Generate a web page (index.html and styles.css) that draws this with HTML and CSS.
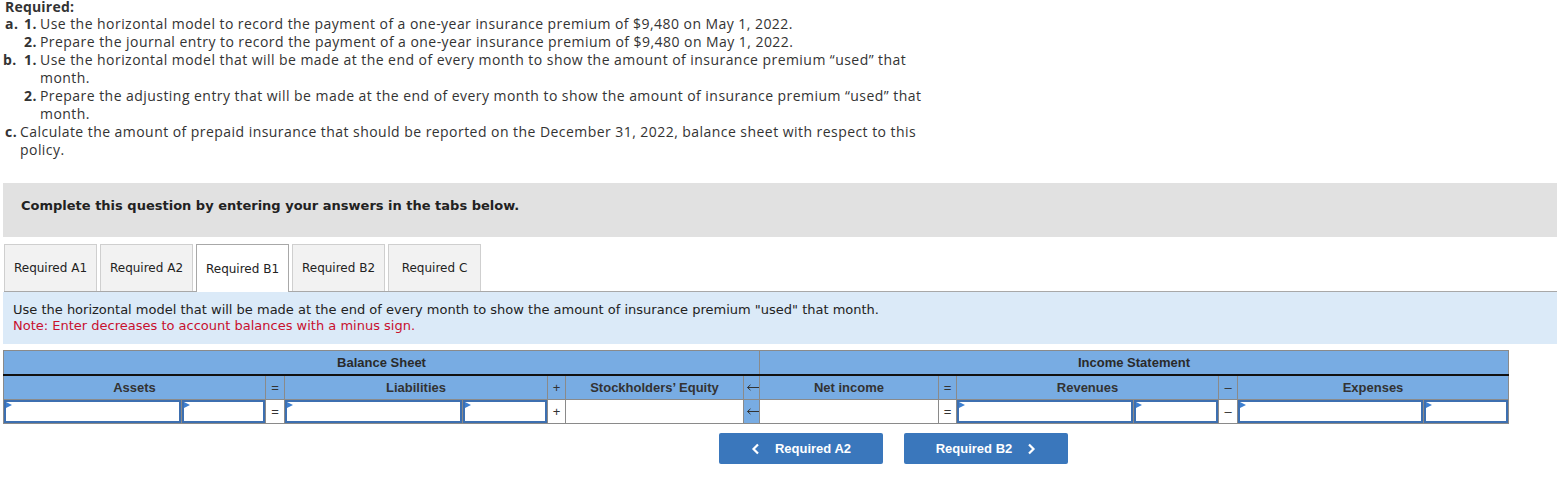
FILE: index.html
```html
<!DOCTYPE html>
<html>
<head>
<meta charset="utf-8">
<link rel="stylesheet" href="styles.css">
</head>
<body>
<div class="req">
  <div class="req-title">Required:</div>
  <div class="item">
    <span class="lbl">a.</span>
    <div class="subs">
      <div class="sub"><span class="num">1.</span><span class="txt">Use the horizontal model to record the payment of a one-year insurance premium of $9,480 on May 1, 2022.</span></div>
      <div class="sub"><span class="num">2.</span><span class="txt">Prepare the journal entry to record the payment of a one-year insurance premium of $9,480 on May 1, 2022.</span></div>
    </div>
  </div>
  <div class="item item-b">
    <span class="lbl">b.</span>
    <div class="subs">
      <div class="sub"><span class="num">1.</span><span class="txt">Use the horizontal model that will be made at the end of every month to show the amount of insurance premium “used” that month.</span></div>
      <div class="sub"><span class="num">2.</span><span class="txt">Prepare the adjusting entry that will be made at the end of every month to show the amount of insurance premium “used” that month.</span></div>
    </div>
  </div>
  <div class="item item-c">
    <span class="lbl">c.</span>
    <span class="txt">Calculate the amount of prepaid insurance that should be reported on the December 31, 2022, balance sheet with respect to this policy.</span>
  </div>
</div>

<div class="banner">Complete this question by entering your answers in the tabs below.</div>

<div class="tabs">
  <div class="tab">Required A1</div>
  <div class="tab">Required A2</div>
  <div class="tab active">Required B1</div>
  <div class="tab">Required B2</div>
  <div class="tab">Required C</div>
</div>

<div class="panel">
  <div>Use the horizontal model that will be made at the end of every month to show the amount of insurance premium "used" that month.</div>
  <div class="note">Note: Enter decreases to account balances with a minus sign.</div>
</div>

<table class="model">
  <colgroup>
    <col style="width:178px"><col style="width:84px"><col style="width:19px">
    <col style="width:178px"><col style="width:85px"><col style="width:18px">
    <col style="width:178px"><col style="width:16px"><col style="width:179px">
    <col style="width:18px"><col style="width:177px"><col style="width:85px">
    <col style="width:19px"><col style="width:186px"><col style="width:85px">
  </colgroup>
  <tr class="r1">
    <th colspan="8">Balance Sheet</th>
    <th colspan="7">Income Statement</th>
  </tr>
  <tr class="r2">
    <th colspan="2" class="h">Assets</th>
    <th class="op">=</th>
    <th colspan="2" class="h">Liabilities</th>
    <th class="op">+</th>
    <th class="h">Stockholders’ Equity</th>
    <th class="op arrow"><svg class="arr" width="13" height="7" viewBox="0 0 13 7"><path d="M1.5 3.5 H13 M4.5 0.8 L1.5 3.5 L4.5 6.2" fill="none" stroke="#333" stroke-width="1"/></svg></th>
    <th class="h">Net income</th>
    <th class="op">=</th>
    <th colspan="2" class="h">Revenues</th>
    <th class="op">–</th>
    <th colspan="2" class="h">Expenses</th>
  </tr>
  <tr class="r3">
    <td class="in"><div class="box"></div></td>
    <td class="in"><div class="box"></div></td>
    <td class="op">=</td>
    <td class="in"><div class="box"></div></td>
    <td class="in"><div class="box"></div></td>
    <td class="op">+</td>
    <td class="plain"></td>
    <td class="op arrow"><svg class="arr" width="13" height="7" viewBox="0 0 13 7"><path d="M1.5 3.5 H13 M4.5 0.8 L1.5 3.5 L4.5 6.2" fill="none" stroke="#333" stroke-width="1"/></svg></td>
    <td class="plain"></td>
    <td class="op">=</td>
    <td class="in"><div class="box"></div></td>
    <td class="in"><div class="box"></div></td>
    <td class="op">–</td>
    <td class="in"><div class="box"></div></td>
    <td class="in"><div class="box"></div></td>
  </tr>
</table>

<div class="nav">
  <button class="btn"><svg width="10" height="12" viewBox="0 0 10 12"><path d="M7 1.5 L2.5 6 L7 10.5" fill="none" stroke="#fff" stroke-width="2.2"/></svg><span>Required A2</span></button>
  <button class="btn"><span>Required B2</span><svg width="10" height="12" viewBox="0 0 10 12"><path d="M3 1.5 L7.5 6 L3 10.5" fill="none" stroke="#fff" stroke-width="2.2"/></svg></button>
</div>
</body>
</html>
```
FILE: styles.css
```css
body {
  margin: 0;
  background: #fff;
  color: #333;
  font-family: "Open Sans", "Liberation Sans", sans-serif;
}

.req {
  margin-top: -2px;
  padding-left: 5px;
  width: 925px;
  font-size: 14px;
  line-height: 18px;
  letter-spacing: 0.45px;
  color: #333;
}
.req-title { font-weight: 700; letter-spacing: 0.2px; line-height: 17px; }
.item { display: flex; }
.lbl { font-weight: 700; width: 19px; flex: none; }
.item-b .lbl { margin-left: -2px; width: 21px; }
.item-c .lbl { width: 15px; }
.subs { flex: 1; }
.sub { display: flex; }
.num { font-weight: 700; width: 16px; flex: none; }
.txt { flex: 1; }

.banner {
  margin: 24px 0 0 3px;
  height: 54px;
  box-sizing: border-box;
  background: #e1e1e1;
  padding: 0 0 10px 18px;
  display: flex;
  align-items: center;
  font-family: "DejaVu Sans", sans-serif;
  font-weight: 700;
  font-size: 13px;
  color: #222;
}

.tabs {
  margin: 7px 0 0 4px;
  display: flex;
  gap: 3px;
  border-bottom: 1px solid #a8a8a8;
  height: 47px;
}
.tab {
  width: 93px;
  height: 47px;
  box-sizing: border-box;
  border: 1px solid #cfcfcf;
  border-bottom: none;
  background: #f2f2f2;
  display: flex;
  align-items: center;
  justify-content: center;
  font-family: "DejaVu Sans", sans-serif;
  font-size: 12px;
  color: #222;
}
.tab.active {
  background: #fff;
  border-color: #a8a8a8;
  height: 48px;
}

.panel {
  margin-left: 3px;
  height: 52px;
  box-sizing: border-box;
  padding: 10px 0 0 10px;
  background: #dbeaf8;
  font-family: "DejaVu Sans", sans-serif;
  font-size: 13px;
  line-height: 16px;
  color: #222;
}
.note { color: #c8102e; }

.model {
  margin: 6px 0 0 3px;
  border-collapse: collapse;
  table-layout: fixed;
  width: 1505px;
  font-family: "Liberation Sans", Arial, sans-serif;
  font-size: 13px;
  color: #333;
}
.model th, .model td {
  border: 1px solid #8a8a8a;
  padding: 0;
  height: 23px;
  text-align: center;
}
.model th { background: #78ace3; }
.r1 th { font-weight: 700; color: #2a2a2a; border-bottom: 2px solid #111; }
.r2 th.h { font-weight: 700; color: #333; }
.op { font-weight: 400; color: #333; background: #fff; }
.r2 th.op { background: #78ace3; }
.model .arrow { background: #78ace3; text-align: right; }
.arr { display: block; margin-left: auto; }
.model td.op { background: #fff; }
.model td.arrow { background: #78ace3; }
.plain { background: #fff; }
.in { background: #fff; }
.box {
  position: relative;
  height: 23px;
  box-sizing: border-box;
  border: 2px solid #3d6fb0;
  background: #fff;
}
.box::before {
  content: "";
  position: absolute;
  left: 0;
  top: 0;
  border-left: 6px solid #3d7fd0;
  border-top: 3px solid transparent;
  border-bottom: 3px solid transparent;
}

.nav {
  margin-top: 9px;
  padding-left: 719px;
  display: flex;
  gap: 21px;
}
.btn {
  width: 164px;
  height: 31px;
  border: none;
  border-radius: 2px;
  background: #3a77bc;
  color: #fff;
  font-family: "Liberation Sans", Arial, sans-serif;
  font-weight: 700;
  font-size: 13px;
  display: flex;
  align-items: center;
  justify-content: center;
  gap: 14px;
  padding: 0;
}
```
